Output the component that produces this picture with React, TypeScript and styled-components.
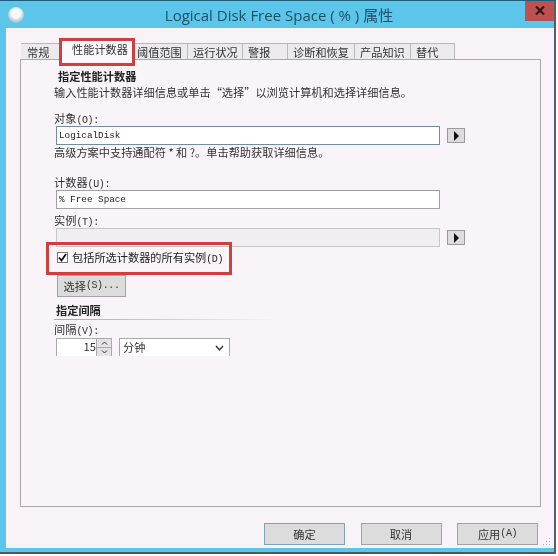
import React from 'react';
import styled, { createGlobalStyle } from 'styled-components';

const tabs = [
  { label: '常规', width: 39, pad: 6 },
  { label: '性能计数器', width: 75, pad: 12 },
  { label: '阈值范围', width: 53, pad: 2 },
  { label: '运行状况', width: 55, pad: 5 },
  { label: '警报', width: 45, pad: 5 },
  { label: '诊断和恢复', width: 67, pad: 5 },
  { label: '产品知识', width: 56, pad: 5 },
  { label: '替代', width: 44, pad: 5 },
];

const GlobalStyle = createGlobalStyle`
  html, body {
    margin: 0;
    padding: 0;
    width: 558px;
    height: 556px;
    overflow: hidden;
    background: #ffffff;
  }
`;

const Dialog = styled.div`
  position: relative;
  width: 556px;
  height: 554px;
  box-sizing: border-box;
  display: flex;
  flex-direction: column;
  background: #5cc6ea;
  border-top: 1px solid #1d5f78;
  border-right: 2px solid #555f66;
  border-bottom: 2px solid #4a5a64;
  overflow: hidden;
  font-family: 'Noto Sans CJK SC', 'Liberation Sans', sans-serif;
  font-size: 11.2px;
  color: #2a2a2a;
  filter: blur(0.3px);
`;

const TitleBar = styled.div`
  height: 27px;
  display: flex;
  align-items: center;
  justify-content: center;
  font-family: 'Open Sans', 'Noto Sans CJK SC', sans-serif;
  font-size: 15px;
  color: #1f4f66;
  padding-left: 4px;
`;

const AppIcon = styled.div`
  position: absolute;
  left: 8px;
  top: 6px;
  width: 16px;
  height: 16px;
  border-radius: 50%;
  background: radial-gradient(circle at 50% 40%, #f4f8fa 0 35%, #a9c4d2 70%, #6f97ab 100%);
`;

const CloseButton = styled.div`
  position: absolute;
  right: -1px;
  top: -1px;
  width: 30px;
  height: 21px;
  display: flex;
  align-items: center;
  justify-content: center;
  background: #c0504f;
  border: 1px solid #a35a5a;
  box-sizing: border-box;
`;

const Client = styled.div`
  flex: 1;
  margin: 0 0 4px 6px;
  display: flex;
  flex-direction: column;
  background: #f7f3f7;
  padding: 15px 14px 0 14px;
`;

const TabStrip = styled.div`
  display: flex;
  height: 16px;
  align-items: flex-end;
  padding-left: 1px;
`;

const Tab = styled.div<{ $active?: boolean; $w: number; $pad: number }>`
  position: relative;
  box-sizing: border-box;
  width: ${(p) => p.$w}px;
  height: ${(p) => (p.$active ? 21 : 16)}px;
  margin-bottom: ${(p) => (p.$active ? -1 : 0)}px;
  display: flex;
  align-items: center;
  padding-left: ${(p) => p.$pad}px;
  padding-bottom: ${(p) => (p.$active ? 3 : 0)}px;
  background: ${(p) => (p.$active ? '#fbf8fb' : '#eceaec')};
  border: 1px solid #b9b9b9;
  border-bottom: none;
  border-left: none;
  z-index: ${(p) => (p.$active ? 2 : 1)};
  color: #333;
  white-space: nowrap;
`;

const Panel = styled.div`
  width: 521px;
  height: 448px;
  box-sizing: border-box;
  border: 1px solid #a9a9a9;
  padding: 8px 0 0 33px;
  display: flex;
  flex-direction: column;
  background: #f8f4f8;
`;

const Heading = styled.div`
  font-weight: bold;
  line-height: 16px;
  height: 16px;
  padding-left: 4px;
  color: #222;
`;

const Line = styled.div<{ $top?: number }>`
  line-height: 16px;
  height: 16px;
  margin-top: ${(p) => p.$top ?? 0}px;
  white-space: nowrap;
  color: #333;
`;

const Mono = styled.span`
  font-family: 'Liberation Mono', monospace;
  font-size: 10px;
  letter-spacing: -0.4px;
  line-height: 1;
`;

const FieldRow = styled.div`
  display: flex;
  align-items: center;
  gap: 7px;
  margin-left: 2px;
`;

const TextBox = styled.div<{ $disabled?: boolean; $strong?: boolean }>`
  box-sizing: border-box;
  width: 384px;
  height: 19px;
  display: flex;
  align-items: center;
  padding-left: 2px;
  font-family: 'Liberation Mono', monospace;
  font-size: 9.3px;
  color: #222;
  background: ${(p) => (p.$disabled ? '#f0eef0' : '#ffffff')};
  border: 1px solid ${(p) => (p.$disabled ? '#c6c6c6' : p.$strong ? '#6f8ea3' : '#a0a0a0')};
`;

const ArrowButton = styled.div`
  width: 18px;
  height: 15px;
  box-sizing: border-box;
  display: flex;
  align-items: center;
  justify-content: center;
  background: #dedcde;
  border: 1px solid #9a9a9a;
`;

const CheckRow = styled.div`
  display: flex;
  align-items: center;
  gap: 4px;
  margin: 2px 0 0 3px;
  height: 16px;
  line-height: 16px;
  color: #222;
`;

const CheckBox = styled.div`
  width: 11px;
  height: 11px;
  box-sizing: border-box;
  border: 1px solid #777;
  background: #fff;
  display: flex;
  align-items: center;
  justify-content: center;
`;

const Button = styled.div<{ $default?: boolean; $w: number }>`
  box-sizing: border-box;
  width: ${(p) => p.$w}px;
  height: 22px;
  display: flex;
  align-items: center;
  justify-content: center;
  background: #dcdcdc;
  border: 1px solid ${(p) => (p.$default ? '#7fa2b8' : '#a2a2a2')};
  color: #333;
`;

const SelectButton = styled(Button)`
  margin: 10px 0 0 3px;
`;

const GroupHeading = styled(Heading)`
  margin-top: 5px;
  padding-left: 2px;
`;

const Rule = styled.div`
  width: 225px;
  height: 1px;
  margin-top: 1px;
  background: linear-gradient(to right, #a9a9a9, #f8f4f8);
`;

const IntervalRow = styled.div`
  display: flex;
  align-items: flex-start;
  margin: 1px 0 0 2px;
  height: 18px;
  overflow: hidden;
`;

const SpinBox = styled.div`
  box-sizing: border-box;
  width: 56px;
  height: 24px;
  display: flex;
  justify-content: flex-end;
  background: #fff;
  border: 1px solid #a9a9a9;
  line-height: 15px;
  color: #333;
`;

const SpinButtons = styled.div`
  width: 14px;
  display: flex;
  flex-direction: column;
  background: #e4e2e4;
  border-left: 1px solid #a9a9a9;
  font-size: 0;
`;

const SpinHalf = styled.div`
  height: 8px;
  display: flex;
  align-items: center;
  justify-content: center;
  border-bottom: 1px solid #a9a9a9;
`;

const Combo = styled.div`
  box-sizing: border-box;
  width: 111px;
  height: 24px;
  margin-left: 7px;
  padding: 0 5px 0 3px;
  display: flex;
  justify-content: space-between;
  background: #fff;
  border: 1px solid #a9a9a9;
  line-height: 17px;
  color: #333;
`;

const Footer = styled.div`
  display: flex;
  justify-content: flex-end;
  gap: 15.5px;
  margin-top: 16px;
  margin-right: 2px;
`;

const Grip = styled.svg`
  position: absolute;
  right: 3px;
  bottom: 6px;
`;

const Highlight = styled.div`
  position: absolute;
  box-sizing: border-box;
  border: 3px solid #cf3f3f;
  pointer-events: none;
  z-index: 5;
`;

const TabHighlight = styled(Highlight)`
  left: 59px;
  top: 37px;
  width: 76px;
  height: 28px;
`;

const CheckHighlight = styled(Highlight)`
  left: 46px;
  top: 241px;
  width: 186px;
  height: 33px;
`;

const Arrow = () => (
  <svg width="7" height="10" viewBox="0 0 7 10">
    <path d="M1 0 L6 5 L1 10 Z" fill="#111" />
  </svg>
);

const App: React.FC = () => (
  <>
    <GlobalStyle />
    <Dialog>
      <AppIcon />
      <TitleBar>Logical Disk Free Space ( % ) 属性</TitleBar>
      <CloseButton>
        <svg width="10" height="9" viewBox="0 0 10 9">
          <path d="M1 .5 L9 8.5 M9 .5 L1 8.5" stroke="#2b1c1c" strokeWidth="2.2" />
        </svg>
      </CloseButton>
      <Client>
        <TabStrip>
          {tabs.map((t, i) => (
            <Tab key={t.label} $w={t.width} $pad={t.pad} $active={i === 1}>
              {t.label}
            </Tab>
          ))}
        </TabStrip>
        <Panel>
          <Heading>指定性能计数器</Heading>
          <Line>输入性能计数器详细信息或单击“选择”以浏览计算机和选择详细信息。</Line>
          <Line $top={10}>对象<Mono>(O):</Mono></Line>
          <FieldRow>
            <TextBox $strong>LogicalDisk</TextBox>
            <ArrowButton>
              <Arrow />
            </ArrowButton>
          </FieldRow>
          <Line $top={-1}>高级方案中支持通配符 * 和 ?。单击帮助获取详细信息。</Line>
          <Line $top={14}>计数器<Mono>(U):</Mono></Line>
          <FieldRow>
            <TextBox>% Free Space</TextBox>
          </FieldRow>
          <Line $top={3}>实例<Mono>(T):</Mono></Line>
          <FieldRow>
            <TextBox $disabled />
            <ArrowButton>
              <Arrow />
            </ArrowButton>
          </FieldRow>
          <CheckRow>
            <CheckBox>
              <svg width="9" height="9" viewBox="0 0 9 9">
                <path d="M1 4.5 L3.5 7.5 L8 1" stroke="#111" strokeWidth="1.8" fill="none" />
              </svg>
            </CheckBox>
            <span>包括所选计数器的所有实例<Mono>(D)</Mono></span>
          </CheckRow>
          <SelectButton $w={69}>选择<Mono>(S)...</Mono></SelectButton>
          <GroupHeading>指定间隔</GroupHeading>
          <Rule />
          <Line $top={1}>间隔<Mono>(V):</Mono></Line>
          <IntervalRow>
            <SpinBox>
              15
              <SpinButtons>
                <SpinHalf>
                  <svg width="7" height="4" viewBox="0 0 7 4">
                    <path d="M1 3.5 L3.5 1 L6 3.5" stroke="#333" fill="none" />
                  </svg>
                </SpinHalf>
                <SpinHalf>
                  <svg width="7" height="4" viewBox="0 0 7 4">
                    <path d="M1 .5 L3.5 3 L6 .5" stroke="#333" fill="none" />
                  </svg>
                </SpinHalf>
              </SpinButtons>
            </SpinBox>
            <Combo>
              分钟
              <svg width="9" height="17" viewBox="0 0 9 17">
                <path d="M1 7 L4.5 11 L8 7" stroke="#333" strokeWidth="1.4" fill="none" />
              </svg>
            </Combo>
          </IntervalRow>
        </Panel>
        <Footer>
          <Button $w={81} $default>确定</Button>
          <Button $w={81}>取消</Button>
          <Button $w={81}>应用<Mono>(A)</Mono></Button>
        </Footer>
      </Client>
      <Grip width="9" height="9" viewBox="0 0 9 9">
        <path d="M7 1h1v1h-1zM7 4h1v1h-1zM4 4h1v1h-1zM7 7h1v1h-1zM4 7h1v1h-1zM1 7h1v1h-1z" fill="#b5b5b5" />
      </Grip>
      <TabHighlight />
      <CheckHighlight />
    </Dialog>
  </>
);

export default App;
